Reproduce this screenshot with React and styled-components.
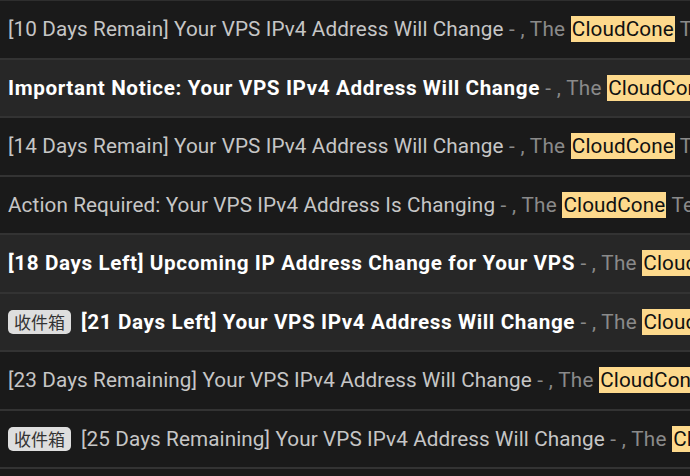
import React from "react";
import styled, { createGlobalStyle } from "styled-components";

const Global = createGlobalStyle`
  html, body { margin: 0; padding: 0; background: #1b1b1b; }
  body { font-family: Roboto, "Noto Sans CJK SC", sans-serif; }
`;

const List = styled.div`
  display: flex;
  flex-direction: column;
  width: 690px;
  height: 476px;
  overflow: hidden;
  background: #1b1b1b;
  border-top: 1px solid #2e2e2e;
`;

const Row = styled.div`
  display: flex;
  align-items: center;
  gap: 10px;
  flex: 0 0 auto;
  box-sizing: border-box;
  height: 58.5px;
  padding-left: 8px;
  white-space: nowrap;
  overflow: hidden;
  background: ${(p) => (p.$unread ? "#272727" : "#1a1a1a")};
  border-bottom: 2px solid #333333;
  font-size: 20.7px;
`;

const Label = styled.span`
  flex: 0 0 auto;
  background: #dedede;
  color: #333;
  font-size: 17px;
  line-height: 24px;
  padding: 0 6px;
  border-radius: 5px;
  font-family: "Noto Sans CJK SC", sans-serif;
`;

const Line = styled.span`
  flex: 0 0 auto;
`;

const Subject = styled.span`
  color: ${(p) => (p.$unread ? "#ffffff" : "#c6c6c6")};
  font-weight: ${(p) => (p.$unread ? 700 : 400)};
  letter-spacing: ${(p) => (p.$unread ? "0.6px" : "0.1px")};
`;

const Snippet = styled.span`
  color: #8a8a8a;
  letter-spacing: 0.3px;
`;

const Mark = styled.span`
  background: #fdd98c;
  color: #111;
  padding: 1px 1px;
  letter-spacing: 0.1px;
`;

const rows = [
  { s: "[10 Days Remain] Your VPS IPv4 Address Will Change" },
  { s: "Important Notice: Your VPS IPv4 Address Will Change", u: true },
  { s: "[14 Days Remain] Your VPS IPv4 Address Will Change" },
  { s: "Action Required: Your VPS IPv4 Address Is Changing" },
  { s: "[18 Days Left] Upcoming IP Address Change for Your VPS", u: true },
  { s: "[21 Days Left] Your VPS IPv4 Address Will Change", u: true, l: true },
  { s: "[23 Days Remaining] Your VPS IPv4 Address Will Change" },
  { s: "[25 Days Remaining] Your VPS IPv4 Address Will Change", l: true },
  { s: "[28 Days Remaining] Your VPS IPv4 Address Will Change" },
];

export default function App() {
  return (
    <>
      <Global />
      <List>
        {rows.map((r, i) => (
          <Row key={i} $unread={r.u}>
            {r.l && <Label>收件箱</Label>}
            <Line>
              <Subject $unread={r.u}>{r.s}</Subject>
              <Snippet>
                {" "}- , The <Mark>CloudCone</Mark> Team
              </Snippet>
            </Line>
          </Row>
        ))}
      </List>
    </>
  );
}
